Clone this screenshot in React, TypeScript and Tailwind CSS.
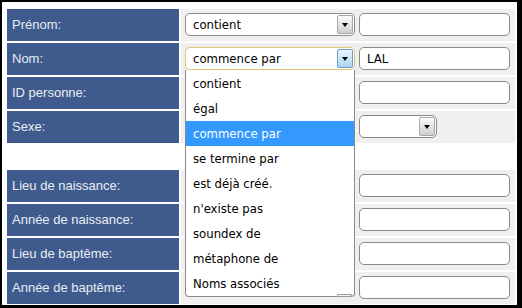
import React from "react";

const optionFont = { fontFamily: "Tahoma, 'DejaVu Sans Condensed', 'DejaVu Sans', sans-serif" };

const options = [
  "contient",
  "égal",
  "commence par",
  "se termine par",
  "est déjà créé.",
  "n'existe pas",
  "soundex de",
  "métaphone de",
  "Noms associés",
];

function Arrow() {
  return <span className="w-0 h-0 border-l-[3px] border-r-[3px] border-t-[4px] border-l-transparent border-r-transparent border-t-black" />;
}

function Select({ value, focused, wide }: { value: string; focused?: boolean; wide?: boolean }) {
  return (
    <div
      className={`flex h-[23px] rounded-[5px] border bg-white ${wide ? "w-[170px]" : "w-[78px]"} ${
        focused ? "border-[#e3c27a]" : "border-[#8a8a8a]"
      }`}
    >
      <div className="flex-1 flex items-center pl-[7px] text-[13px] text-black" style={optionFont}>
        {value}
      </div>
      <div
        className={`w-[16px] my-[1px] mr-[1px] flex items-center justify-center border rounded-[2px] ${
          focused
            ? "border-[#6a9fc6] bg-gradient-to-b from-[#eaf6fd] to-[#a9d6f3]"
            : "border-[#a8a8a8] bg-gradient-to-b from-[#fbfbfb] to-[#cfcfcf]"
        }`}
      >
        <Arrow />
      </div>
    </div>
  );
}

function Input({ value }: { value?: string }) {
  return (
    <div
      className="w-[151px] h-[23px] rounded-[5px] border border-[#8a8a8a] bg-white flex items-center pl-[7px] text-[13px] text-black"
      style={optionFont}
    >
      {value}
    </div>
  );
}

function Row({ label, children, open }: { label: string; children?: React.ReactNode; open?: boolean }) {
  return (
    <div className="flex gap-[2px] h-[32px]">
      <div className="w-[172px] bg-[#3f5b8d] text-[#e9edf4] text-[13px] flex items-center pl-[5px] pb-[1px]">
        {label}
      </div>
      <div className="relative w-[334px] bg-[#efefef] flex items-start gap-[4px] pt-[4px] pl-[4px]">
        {children}
        {open && (
          <div
            className="absolute z-10 left-[4px] top-[27px] w-[170px] h-[227px] bg-white border border-t-0 border-[#8a8a8a] rounded-b-[4px] pt-[1px]"
            style={optionFont}
          >
            {options.map((o) => (
              <div
                key={o}
                className={`h-[25px] flex items-center pl-[7px] text-[13px] ${
                  o === "commence par" ? "bg-[#3399ff] text-white" : "text-black"
                }`}
              >
                {o}
              </div>
            ))}
            <div className="absolute right-[2px] bottom-[-1px] w-[15px] h-[3px] border border-[#9a9a9a] bg-[#f4f4f4] rounded-[1px]" />
          </div>
        )}
      </div>
    </div>
  );
}

export default function App() {
  return (
    <div
      className="w-[522px] h-[308px] bg-white border-black border-t-2 border-l-2 border-r-[5px] border-b-[3px] pl-[5px] pt-[7px] pr-[2px]"
      style={{ fontFamily: "'Liberation Sans', Arial, sans-serif" }}
    >
      <div className="flex flex-col gap-[2px]">
        <Row label="Prénom:">
          <Select value="contient" wide />
          <Input />
        </Row>
        <Row label="Nom:" open>
          <Select value="commence par" wide focused />
          <Input value="LAL" />
        </Row>
        <Row label="ID personne:">
          <div className="w-[170px]" />
          <Input />
        </Row>
        <Row label="Sexe:">
          <div className="w-[170px]" />
          <Select value="" />
        </Row>
        <div className="h-[23px]" />
        <Row label="Lieu de naissance:">
          <div className="w-[170px]" />
          <Input />
        </Row>
        <Row label="Année de naissance:">
          <div className="w-[170px]" />
          <Input />
        </Row>
        <Row label="Lieu de baptême:">
          <div className="w-[170px]" />
          <Input />
        </Row>
        <Row label="Année de baptême:">
          <div className="w-[170px]" />
          <Input />
        </Row>
      </div>
    </div>
  );
}
